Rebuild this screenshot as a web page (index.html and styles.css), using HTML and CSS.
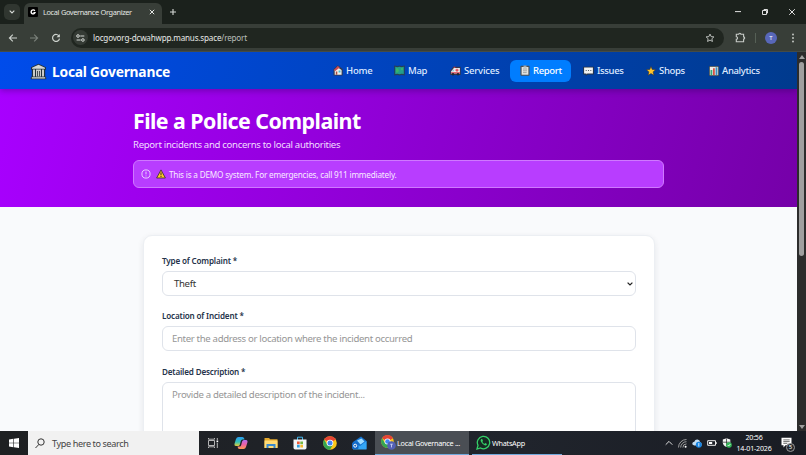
FILE: index.html
```html
<!DOCTYPE html>
<html lang="en">
<head>
  <meta charset="UTF-8">
  <meta name="viewport" content="width=device-width, initial-scale=1.0">
  <title>Local Governance Organizer</title>
  <link rel="stylesheet" href="styles.css">
</head>
<body>

  <div class="tabs">
    <div class="tab-search">
      <svg width="6" height="4" viewBox="0 0 6 4"><path d="M.7.7 3 3 5.3.7" fill="none" stroke="#d5d9d5" stroke-width="1.1"/></svg>
    </div>
    <div class="tab">
      <svg class="favicon" width="10" height="10" viewBox="0 0 10 10"><rect width="10" height="10" rx="1" fill="#000"/><path d="M6.8 3.8A2 2 0 1 0 7 5.600H5.4" fill="none" stroke="#fff" stroke-width="1.4"/></svg>
      <span class="tab-title">Local Governance Organizer</span>
      <svg class="tab-close" width="6" height="6" viewBox="0 0 6 6"><path d="m.8.8 4.4 4.4M5.2.8.8 5.2" stroke="#e3e6e3" stroke-width="1"/></svg>
    </div>
    <svg class="new-tab" width="8" height="8" viewBox="0 0 8 8"><path d="M4 1v6M1 4h6" stroke="#d5d9d5" stroke-width="1.1"/></svg>
    <div class="window-buttons">
      <svg width="8" height="8" viewBox="0 0 8 8"><path d="M1 3.6h6" stroke="#e0e0e0"/></svg>
      <svg width="8" height="8" viewBox="0 0 8 8"><path d="M1.5 2.5h4v4h-4zM3 2.500v-1h3.500v3.500h-1" fill="none" stroke="#e0e0e0"/></svg>
      <svg width="8" height="8" viewBox="0 0 8 8"><path d="m1.2 1.2 5.6 5.6M6.8 1.2 1.2 6.8" stroke="#e0e0e0"/></svg>
    </div>
  </div>

  <div class="toolbar">
    <svg width="10" height="10" viewBox="0 0 10 10"><path d="M9 5H1.5M4.8 1.6 1.4 5l3.4 3.4" fill="none" stroke="#cdd2cd" stroke-width="1.1"/></svg>
    <svg width="10" height="10" viewBox="0 0 10 10"><path d="M1 5h7.5M5.2 1.6 8.6 5 5.2 8.4" fill="none" stroke="#7b817b" stroke-width="1.1"/></svg>
    <svg class="reload" width="10" height="10" viewBox="0 0 10 10"><path d="M8.2 3.4A3.5 3.5 0 1 0 8.5 5.6" fill="none" stroke="#cdd2cd" stroke-width="1.2"/><path d="M8.8 1v3.3H5.5z" fill="#cdd2cd"/></svg>
    <div class="address">
      <span class="site-info">
        <svg width="9" height="8" viewBox="0 0 9 8"><g fill="none" stroke="#d5d9d5"><circle cx="2" cy="2" r="1.3"/><path d="M4.3 2h4M.6 6h4"/><circle cx="6.9" cy="6" r="1.3"/></g></svg>
      </span>
      <span class="url">locgovorg-dcwahwpp.manus.space<span class="url-path">/report</span></span>
      <svg width="10" height="10" viewBox="0 0 10 10"><path d="m5 1.1 1.15 2.5 2.75.3-2.05 1.85.6 2.7L5 7.1 2.55 8.45l.6-2.7L1.1 3.9l2.75-.3z" fill="none" stroke="#c8ccc8" stroke-width=".9"/></svg>
    </div>
    <svg class="extensions" width="11" height="11" viewBox="0 0 11 11"><path d="M1.3 2.3h2.4a1.1 1.1 0 0 1 2.2 0h2.7v2.6a1.1 1.1 0 0 1 0 2.2v2.6H1.3V7.3a1.3 1.3 0 0 0 0-2.6z" fill="none" stroke="#c8ccc8" stroke-width="1.1"/></svg>
    <span class="divider"></span>
    <span class="profile">T</span>
    <svg class="menu" width="4" height="10" viewBox="0 0 4 10" fill="#cdd2cd"><circle cx="2" cy="1.5" r=".9"/><circle cx="2" cy="5" r=".9"/><circle cx="2" cy="8.5" r=".9"/></svg>
  </div>

  <div class="viewport">
    <div class="page">
      <div class="header">
        <div class="brand">
          <svg width="17" height="17" viewBox="0 0 17 17"><path d="M8.5.7 16 4.3v2.5h-.8v6.5l1 1.2v1.8H.8v-1.8l1-1.2V6.8H1V4.3z" fill="#25323d"/><path d="M8.5 1.7 15 4.8v.9H2v-.9zM1.8 14.3h13.4v1.2H1.8z" fill="#d8d8d5"/><path d="M3 6.600h2v6.800H3zM12 6.600h2v6.800h-2zM6 6.600h5v6.800H6z" fill="#c9cac8"/><path d="M7 8h1v5.4H7zM9 8h1v5.4H9z" fill="#4b5054"/></svg>
          <span class="brand-name">Local Governance</span>
        </div>
        <div class="nav">
          <div class="nav-item home">
            <svg width="10" height="11" viewBox="0 0 10 11"><path d="M4.700.3 9.700 4v6.500H.5V4.300z" fill="#323b50"/><path d="M1.700 5 5 2.500 8.600 5v4.700H1.700z" fill="#f1eee9"/><path d="M.8 5 4.800.9 6.800 2.400 2.300 6z" fill="#cf4b58"/><path d="M2.800 6.500h1.500v3.200H2.800z" fill="#a64b40"/><path d="M5.600 5.500h1.900v2H5.600z" fill="#42bfd5"/></svg>
            <span>Home</span>
          </div>
          <div class="nav-item map">
            <svg width="11" height="11" viewBox="0 0 11 11"><path d="m.2.600 3.300.5 2-.5 2 .5 3.300-.5v9.800l-3.300-.4-2 .4-2-.4-3.300.4z" fill="#263f55"/><path d="m1.200 1.800 2.300.4 2-.5 2 .5 2.300-.4v7.300l-2.300-.4-2 .5-2-.5-2.300.4z" fill="#239d8b"/><path d="M2 3.200h2l1 2.200-1 2H2zM7 2.800h2v2.500H7z" fill="#37b56a"/></svg>
            <span>Map</span>
          </div>
          <div class="nav-item services">
            <svg width="11" height="10" viewBox="0 0 11 10"><path d="M3.300.8h7.400v8.200H.2V5z" fill="#35384c"/><path d="M3.900 2h6v5.600H1.200V5.300z" fill="#ece7e9"/><path d="M1.200 6.300h8.700v1.200H1.200zM6.400 2.700h1.200v3H6.400zM5.500 3.600h3v1.100h-3zM3.700.7h1.600v1.100H3.700z" fill="#dc4252"/><path d="m3.500 3.200-1.400 2h1.600z" fill="#59b9dc"/><circle cx="3" cy="8.300" r="1.200" fill="#202735"/><circle cx="8" cy="8.300" r="1.200" fill="#202735"/></svg>
            <span>Services</span>
          </div>
          <div class="nav-item report active">
            <svg width="10" height="11" viewBox="0 0 10 11"><rect x=".4" y=".7" width="9.200" height="10" rx="1" fill="#4c5055"/><path d="M1.600 2h6.800v7.700H1.600z" fill="#e4e4e2"/><path d="M3.500.5h3v2h-3z" fill="#a5a9aa"/><path d="M3 4h4M3 5.800h4M3 7.600h3.700" stroke="#85898b" stroke-width=".7"/></svg>
            <span>Report</span>
          </div>
          <div class="nav-item issues">
            <svg width="11" height="10" viewBox="0 0 11 10"><path d="M.2.700h10.600v7.800H4.700L2.800 10V8.500H.2z" fill="#293242"/><path d="M1.100 1.600h8.800v5.900H4.300L3.500 8.500v-1H1.100z" fill="#f2f2f2"/><path d="M2.700 4h1v1h-1zM5 4h1v1H5zM7.300 4h1v1h-1z" fill="#596069"/></svg>
            <span>Issues</span>
          </div>
          <div class="nav-item shops">
            <svg width="10" height="10" viewBox="0 0 10 10"><path d="m5 .5 1.300 3 3.300.2-2.500 2.200.8 3.400L5 7.600 2.100 9.300l.8-3.400L.4 3.700l3.300-.2z" fill="#ffc42b" stroke="#373535" stroke-width=".6"/></svg>
            <span>Shops</span>
          </div>
          <div class="nav-item analytics">
            <svg width="10" height="10" viewBox="0 0 10 10"><rect width="10" height="10" rx=".8" fill="#37434c"/><path d="M.8.800h8.400v8.400H.8z" fill="#ece9e5"/><path d="M1.500 4h1.800v5H1.500z" fill="#38a779"/><path d="M4 2.300h1.800V9H4z" fill="#d75245"/><path d="M6.600 1.300h1.800V9H6.600z" fill="#3a8ec1"/></svg>
            <span>Analytics</span>
          </div>
        </div>
      </div>

      <div class="hero">
        <h1>File a Police Complaint</h1>
        <p class="subtitle">Report incidents and concerns to local authorities</p>
        <div class="notice">
          <svg width="10" height="10" viewBox="0 0 10 10"><circle cx="5" cy="5" r="4.1" fill="none" stroke="#f1dcff" stroke-width=".9"/><path d="M5 2.6v2.8M5 6.5v.9" stroke="#f1dcff" stroke-width=".9"/></svg>
          <svg class="warning" width="10" height="10" viewBox="0 0 10 10"><path d="M5 .9 9.4 9H.6z" fill="#ffc91f" stroke="#44333d" stroke-width=".9" stroke-linejoin="round"/><path d="M5 3.4v2.9M5 7v1" stroke="#332d2a" stroke-width="1"/></svg>
          <span class="notice-text">This is a DEMO system. For emergencies, call 911 immediately.</span>
        </div>
      </div>

      <div class="card">
        <label class="type-label">Type of Complaint *</label>
        <div class="field select">
          <span class="select-value">Theft</span>
          <svg width="6" height="4" viewBox="0 0 6 4"><path d="m.6.6 2.4 2.3L5.4.6" fill="none" stroke="#222" stroke-width="1.3"/></svg>
        </div>
        <label class="location-label">Location of Incident *</label>
        <div class="field"><span class="location-hint">Enter the address or location where the incident occurred</span></div>
        <label class="description-label">Detailed Description *</label>
        <div class="field textarea"><span class="description-hint">Provide a detailed description of the incident...</span></div>
      </div>
    </div>

    <div class="scrollbar">
      <svg width="6" height="4" viewBox="0 0 6 4"><path d="M3 0 6 4H0z" fill="#a0a0a0"/></svg>
      <div class="thumb"></div>
      <svg width="6" height="4" viewBox="0 0 6 4"><path d="M0 0h6L3 4z" fill="#a0a0a0"/></svg>
    </div>
  </div>

  <div class="taskbar">
    <div class="start">
      <svg width="10" height="10" viewBox="0 0 10 10"><path d="m0 1.4 4.4-.6v3.9H0zM5 .7l5-.7v4.7H5zM0 5.3h4.4v3.9L0 8.6zM5 5.3h5V10l-5-.7z" fill="#fff"/></svg>
    </div>
    <div class="search">
      <svg width="10" height="11" viewBox="0 0 10 11"><circle cx="6" cy="4" r="3.2" fill="none" stroke="#333"/><path d="M3.8 6.5.5 10" stroke="#333"/></svg>
      <span class="search-text">Type here to search</span>
    </div>
    <div class="apps">
      <svg width="12" height="12" viewBox="0 0 12 12"><path d="M1.500 3.500h6v5h-6zM1.500 1v1.200h6V1M1.500 11V9.800h6V11M10.300 1v2M10.300 6v5" fill="none" stroke="#c5c5c5" stroke-width=".9"/><path d="M9.500 3.500h1.700v1.700H9.500z" fill="#fff"/></svg>
      <svg width="14" height="14" viewBox="0 0 14 14">
        <defs>
          <linearGradient id="copilot-a" x2="0" y2="1"><stop stop-color="#2a9bf0"/><stop offset=".55" stop-color="#31c1b7"/><stop offset="1" stop-color="#e8cc36"/></linearGradient>
          <linearGradient id="copilot-b" x2="0" y2="1"><stop stop-color="#b46bf0"/><stop offset=".5" stop-color="#ec62a2"/><stop offset="1" stop-color="#ff9a50"/></linearGradient>
        </defs>
        <path d="M4.500 1h4q1.300 0 1.700 1.500l.3 1H8.400Q7.200 3.500 6.800 5L5.900 8.500Q5.400 10 4 10H2Q0 10 .6 7.500L2 3Q2.700 1 4.500 1z" fill="url(#copilot-a)"/>
        <path d="M9.500 13h-4q-1.300 0-1.700-1.500l-.3-1h2.100q1.200 0 1.600-1.500L8.100 5.500Q8.600 4 10 4h2q2 0 1.400 2.500L12 11q-.7 2-2.500 2z" fill="url(#copilot-b)"/>
      </svg>
      <svg width="14" height="12" viewBox="0 0 14 12"><path d="M.5 1h4.500l1.200 1.200h7.300V11H.5z" fill="#e5a92d"/><path d="M.5 3.500h13V11H.5z" fill="#ffdb75"/><path d="M2.500 7h9v4h-2V9h-5v2h-2z" fill="#3989ce"/></svg>
      <svg width="14" height="14" viewBox="0 0 14 14"><path d="M4.500 4V1.200h5V4" fill="none" stroke="#44b8ed"/><path d="M.5 3.500h13v8.300q0 1.700-1.700 1.700H2.200Q.5 13.500.5 11.800z" fill="#f3f6f8"/><path d="M4 5.500h2.700v2.700H4z" fill="#f05a36"/><path d="M7.300 5.500H10v2.700H7.300z" fill="#75b843"/><path d="M4 8.800h2.700v2.700H4z" fill="#2b9fe0"/><path d="M7.300 8.800H10v2.700H7.300z" fill="#f5b92d"/></svg>
      <svg width="14" height="14" viewBox="0 0 14 14"><circle cx="7" cy="7" r="6.800" fill="#fbc718"/><path d="M7 7 1.100 3.600A6.800 6.800 0 0 1 12.900 3.600z" fill="#e64435"/><path d="M1.100 3.600A6.800 6.800 0 0 0 7 13.800L10 8.600 4 8.600z" fill="#35a653"/><circle cx="7" cy="7" r="3.300" fill="#fff"/><circle cx="7" cy="7" r="2.500" fill="#4285f4"/></svg>
      <svg width="15" height="14" viewBox="0 0 15 14"><path d="M1 6 9 .5l5.500 4.500v8H1z" fill="#1472cf"/><path d="m5 4.500 4.500-2 3 3-4 3z" fill="#9fdcff"/><path d="m1 7 7 3 6.500-5v8.500H1z" fill="#34a6f4"/><rect y="6.500" width="6.500" height="6.500" rx="1" fill="#1268c5"/><circle cx="3.200" cy="9.700" r="1.500" fill="none" stroke="#fff"/></svg>
    </div>
    <div class="task chrome">
      <svg width="15" height="15" viewBox="0 0 15 15"><circle cx="6.500" cy="6.500" r="6.300" fill="#fbc718"/><path d="M6.500 6.500 1 3.300A6.300 6.300 0 0 1 12 3.300z" fill="#e64435"/><path d="M1 3.300a6.300 6.300 0 0 0 5.500 9.500L9 8 4 8z" fill="#35a653"/><circle cx="6.500" cy="6.500" r="3" fill="#fff"/><circle cx="6.500" cy="6.500" r="2.300" fill="#4285f4"/><circle cx="10.500" cy="10.500" r="4.300" fill="#5360b5"/><path d="M9.200 9.200h2.600M10.500 9.200v3.200" stroke="#d9ddff" stroke-width=".8"/></svg>
      <span>Local Governance ...</span>
    </div>
    <div class="task whatsapp">
      <svg width="15" height="15" viewBox="0 0 15 15"><path d="M1 14l1-3.600A6.200 6.200 0 1 1 4.500 13z" fill="#172b24" stroke="#35d169" stroke-width="1.300"/><path d="M5.300 4Q4 4.900 5 6.800 6.500 9.800 9.200 10.500q1.400 0 1.800-1.500L9.200 8l-.8.900Q6.900 8.100 6.300 6.700L7 5.900 6.200 4z" fill="#35d169"/></svg>
      <span>WhatsApp</span>
    </div>
    <div class="tray">
      <svg width="8" height="6" viewBox="0 0 8 6"><path d="m.7 4.700 3.300-3.300 3.300 3.300" fill="none" stroke="#ddd"/></svg>
      <svg width="9" height="9" viewBox="0 0 9 9"><g fill="none" stroke="#aaa" stroke-width=".9"><path d="M.5 8.500A8 8 0 0 1 8.500.5M2.700 8.500a5.800 5.800 0 0 1 5.800-5.800M4.900 8.500a3.600 3.600 0 0 1 3.600-3.600"/></g><circle cx="7.600" cy="7.700" r="1" fill="#fff"/></svg>
      <svg width="10" height="10" viewBox="0 0 10 10"><path d="M2.300 7.500Q0 7.300.3 5.300.7 3.800 2.300 3.800 3.200 1.200 5.500 1.500q2.300.3 2.500 2.600Q9.900 4.500 9.800 7.500z" fill="#c2dcf1"/><circle cx="6.800" cy="6.700" r="3" fill="#1683e1"/><path d="M6.800 5v3.500" stroke="#fff" stroke-width=".8"/></svg>
      <svg width="10" height="8" viewBox="0 0 10 8"><path d="M.7 1.700h7.800v4.600H.7zM9.300 3.200v1.700" fill="none" stroke="#eee"/><path d="M2 3h3.200v2H2z" fill="#fff"/></svg>
      <svg width="10" height="10" viewBox="0 0 10 10"><path d="M.8 1.500 4.500.3l3.800 1.200v3.300Q8 7.500 4.500 9 1 7.500.8 4.800z" fill="#f3f3f3"/><path d="M4.500.5v8M1 4.200h7" stroke="#222" stroke-width=".7"/><circle cx="7" cy="7" r="2.800" fill="#35b658"/><path d="m5.700 7 1 1 1.700-2" fill="none" stroke="#fff" stroke-width=".8"/></svg>
    </div>
    <div class="clock">
      <span class="time">20:56</span>
      <span class="date">14-01-2026</span>
    </div>
    <div class="notifications">
      <svg width="11" height="11" viewBox="0 0 11 11"><path d="M.5.800h10v7.500H4.500L2.500 10.500V8.300h-2z" fill="#fff"/><path d="M2.300 2.900h6.400M2.300 4.600h6.400M2.300 6.300h4" stroke="#333" stroke-width=".7"/></svg>
      <span class="count">5</span>
    </div>
  </div>

</body>
</html>
```

FILE: styles.css
```css
*{
  box-sizing: border-box;
}

body{
  margin: 0;
  width: 806px;
  height: 455px;
  overflow: hidden;
  display: flex;
  flex-direction: column;
  font-family: "Noto Sans", sans-serif;
  font-size: 9px;
}

svg{
  display: block;
  flex: none;
}

span,
label,
h1{
  white-space: nowrap;
}

/* browser window */

.tabs{
  height: 24px;
  flex: none;
  display: flex;
  align-items: center;
  background-color: #1b211c;
}

.tab-search{
  width: 16px;
  height: 16px;
  margin-left: 4px;
  border-radius: 5px;
  background-color: #303630;
  display: flex;
  align-items: center;
  justify-content: center;
}

.tab{
  width: 138px;
  height: 21px;
  margin: 3px 0 0 4px;
  padding: 0 7px 3px 4px;
  border-radius: 6px 6px 0 0;
  background-color: #383e38;
  color: #e3e6e3;
  display: flex;
  align-items: center;
}

.tab-title{
  margin-left: 5px;
  font-size: 7.4px;
  letter-spacing: -0.38px;
  word-spacing: 0.3px;
}

.tab-close{
  margin-left: auto;
}

.new-tab{
  margin-left: 7px;
}

.window-buttons{
  margin-left: auto;
  padding-right: 10px;
  display: flex;
  gap: 19px;
}

.toolbar{
  height: 28px;
  flex: none;
  padding: 0 11px 0 8px;
  background-color: #383e38;
  border-bottom: 1px solid #454b45;
  display: flex;
  align-items: center;
  gap: 11px;
}

.reload{
  margin: 0 -1px 0 1px;
}

.address{
  width: 653px;
  height: 20px;
  padding: 0 9px 0 2px;
  border-radius: 10px;
  background-color: #202620;
  display: flex;
  align-items: center;
}

.address > svg{
  margin-left: auto;
}

.site-info{
  width: 15px;
  height: 15px;
  border-radius: 50%;
  background-color: #353b35;
  display: flex;
  align-items: center;
  justify-content: center;
}

.url{
  margin-left: 5px;
  color: #e6e8e6;
  font-size: 8.1px;
  letter-spacing: -0.18px;
}

.url-path{
  color: #b9beb9;
}

.divider{
  width: 1px;
  height: 10px;
  margin-left: -2px;
  background-color: #566056;
}

.profile{
  width: 12px;
  height: 12px;
  margin-left: -2px;
  border-radius: 50%;
  background-color: #5867b9;
  color: #fff;
  font-size: 6px;
  line-height: 12px;
  text-align: center;
}

.menu{
  margin-left: 3px;
}

.viewport{
  height: 379px;
  flex: none;
  display: flex;
  overflow: hidden;
}

.page{
  width: 797px;
  background-color: #f9fafc;
  overflow: hidden;
}

.scrollbar{
  width: 9px;
  padding: 3px 0 2px;
  background-color: #2c2c2c;
  display: flex;
  flex-direction: column;
  align-items: center;
}

.thumb{
  width: 5px;
  height: 194px;
  margin: 3px 0 auto;
  border-radius: 3px;
  background-color: #9f9f9f;
}

/* site header */

.header{
  position: relative;
  height: 37px;
  padding: 0 25px 0 30px;
  background: linear-gradient(105deg, #004ceb, #003a8d);
  box-shadow: 0 2px 6px rgba(20, 0, 60, 0.3);
  display: flex;
  align-items: center;
  justify-content: space-between;
}

.brand,
.nav,
.nav-item{
  display: flex;
  align-items: center;
}

.brand{
  gap: 5px;
  padding-top: 2px;
}

.brand-name{
  color: #fff;
  font-size: 13.8px;
  font-weight: 700;
  letter-spacing: -0.22px;
}

.nav{
  gap: 2px;
}

.nav-item{
  height: 22px;
  padding: 0 0 0 10px;
  border-radius: 6px;
  gap: 3px;
  color: #dfeaff;
  font-size: 9.5px;
  font-weight: 500;
  letter-spacing: -0.33px;
}

.home{ width: 59px; }
.map{ width: 54px; }
.services{ width: 68px; }
.report{ width: 61px; }
.issues{ width: 61px; }
.shops{ width: 61px; }
.analytics{ width: 73px; }

.home,
.services{
  letter-spacing: -0.2px;
}

.active{
  background-color: #007dff;
  color: #fff;
}

.hero{
  height: 118px;
  padding: 18px 133px 0;
  background: linear-gradient(105deg, #a800ff, #7500a8);
  color: #fff;
}

h1{
  margin: 0;
  font-size: 21.4px;
  line-height: 28px;
  font-weight: 700;
  letter-spacing: -0.55px;
}

.subtitle{
  margin: 3px 0 8px;
  color: #f1ddff;
  font-size: 9.6px;
  line-height: 14px;
  letter-spacing: -0.32px;
}

.notice{
  height: 28px;
  padding-left: 7px;
  border: 1px solid #cf78ff;
  border-radius: 6px;
  background-color: #b83dff;
  display: flex;
  align-items: center;
}

.warning{
  margin-left: 5px;
}

.notice-text{
  margin-left: 3px;
  color: #f8ebff;
  font-size: 8.2px;
  letter-spacing: -0.2px;
}

/* complaint form */

.card{
  width: 512px;
  height: 260px;
  margin: 28px 0 0 143px;
  padding: 19px 18px 0;
  border: 1px solid #eceff3;
  border-radius: 9px;
  background-color: #fff;
  box-shadow: 0 2px 6px rgba(30, 40, 60, 0.09);
}

label{
  display: block;
  height: 12px;
  margin-bottom: 4px;
  color: #25334a;
  font-size: 8.1px;
  line-height: 12px;
  font-weight: 600;
  letter-spacing: -0.17px;
}

.field{
  height: 25px;
  margin-bottom: 14.4px;
  padding: 0 9px;
  border: 1px solid #dfe3ea;
  border-radius: 6px;
  color: #969696;
  font-size: 9.6px;
  letter-spacing: -0.33px;
  display: flex;
  align-items: center;
}

.select{
  padding: 0 2px 0 11px;
  color: #333;
  justify-content: space-between;
}

.textarea{
  height: 90px;
  padding-top: 5px;
  align-items: flex-start;
}

/* windows taskbar */

.taskbar{
  height: 24px;
  flex: none;
  background: linear-gradient(90deg, #1e2022, #20242c 65%, #191c23);
  color: #fff;
  display: flex;
}

.start{
  width: 28px;
  display: flex;
  align-items: center;
  justify-content: center;
}

.search{
  width: 171px;
  padding-left: 7px;
  background-color: #f1f1f1;
  color: #444;
  display: flex;
  align-items: center;
  gap: 7px;
}

.search-text{
  font-size: 9.1px;
  letter-spacing: -0.38px;
}

.apps{
  width: 176px;
  padding: 0 8px 0 8px;
  display: flex;
  align-items: center;
  justify-content: space-between;
}

.task{
  display: flex;
  align-items: center;
  gap: 1px;
  font-size: 7.3px;
  letter-spacing: -0.28px;
  border-bottom: 1px solid #71a9dc;
}

.chrome{
  width: 94px;
  padding-left: 6px;
  background-color: #4a4e54;
}

.whatsapp{
  width: 90px;
  margin-left: 3px;
  padding-left: 4px;
}

.tray{
  margin-left: auto;
  display: flex;
  align-items: center;
  gap: 5px;
}

.clock{
  width: 44px;
  display: flex;
  flex-direction: column;
  align-items: center;
  justify-content: center;
  font-size: 7.1px;
  line-height: 11px;
  letter-spacing: -0.2px;
}

.notifications{
  position: relative;
  width: 30px;
  padding: 6px 0 0 5px;
}

.count{
  position: absolute;
  left: 10px;
  top: 12px;
  width: 9px;
  height: 9px;
  border: 1px solid #999;
  border-radius: 50%;
  background-color: #25272c;
  font-size: 6px;
  line-height: 7px;
  text-align: center;
}
```
